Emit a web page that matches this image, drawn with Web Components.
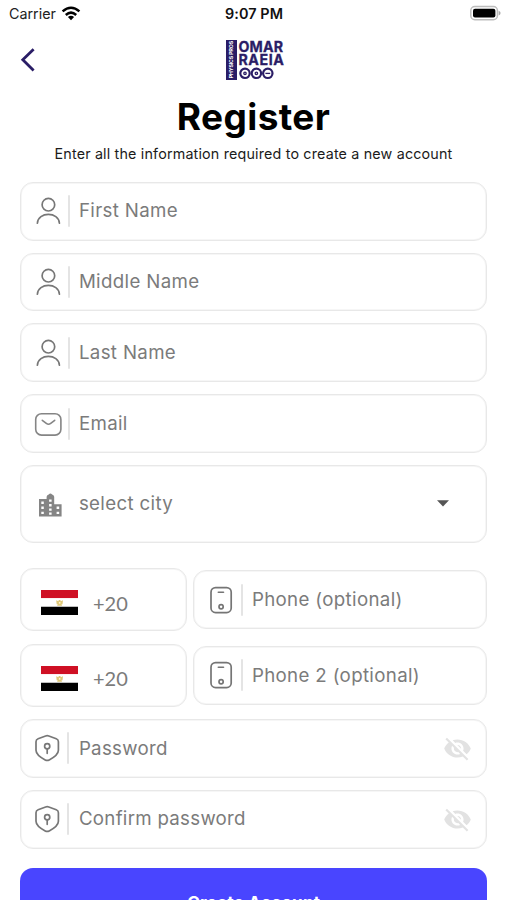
<!DOCTYPE html>
<html lang="en">
<head>
<meta charset="utf-8">
<title>Register</title>
<style>
html,body{margin:0;height:900px;overflow:hidden;background:#fff}
</style>
</head>
<body>
<register-screen></register-screen>
<script>
const ICONS = {
  user: `<svg width="28" height="30" viewBox="0 0 28 30" fill="none" stroke="#777" stroke-width="1.7" stroke-linecap="round"><circle cx="14.4" cy="8.7" r="6.3"/><path d="M3.4 27.2C3.9 15.5 24.9 15.5 25.4 27.2"/></svg>`,
  mail: `<svg width="28" height="30" viewBox="0 0 28 30" fill="none" stroke="#858585" stroke-width="1.6" stroke-linecap="round"><rect x="1.7" y="4.7" width="25.2" height="21.4" rx="5.8"/><path d="M8.3 11.3L12.3 14.4Q14.5 16.1 16.7 14.4L20.7 11.3"/></svg>`,
  city: `<svg width="28" height="30" viewBox="-1 -1.6 28 30"><path fill="#858585" fill-rule="evenodd" d="M4 8.4h7.6V6.2Q12 4.6 13.7 4Q15.4 1.6 17.1 4Q18.8 4.6 19.2 6.2v7.5h7.4v12.2H4zM6.3 11v2.3h2.5V11zm0 5v2.3h2.5V16zm0 5.1v2.4h2.5v-2.4zM14.1 8.8v2.3h2.5V8.8zm0 4.7v2.3h2.5v-2.3zm0 4.3v2.3h2.5v-2.3zm0 4.2v2.1h2.5V22zM21.6 16v2.3h2.6V16zm0 5.1v2.4h2.6v-2.4z"/></svg>`,
  phone: `<svg width="28" height="30" viewBox="0 0 28 30" fill="none" stroke="#757575" stroke-width="1.7" stroke-linecap="round"><rect x="4" y="2.6" width="20.2" height="25" rx="4.6"/><path d="M11.3 7.2h5.2" stroke-width="1.6"/><circle cx="14.1" cy="21.8" r="2.1"/></svg>`,
  shield: `<svg width="28" height="30" viewBox="0 0 28 30" fill="none" stroke="#777" stroke-width="1.7" stroke-linecap="round" stroke-linejoin="round"><path d="M11.6 3Q13.2 2.4 14.8 3L22.3 5.7Q24.4 6.5 24.4 8.7V17.2C24.4 21 20.8 23.9 15.2 26.9Q13.2 28 11.2 26.9C5.6 23.9 2 21 2 17.2V8.7Q2 6.5 4.1 5.7Z"/><circle cx="13.2" cy="13.2" r="2.6"/><path d="M13.2 16v4.3"/></svg>`,
  eye: `<svg width="29" height="29" viewBox="0 0 24 24" fill="#e2e2e2"><path d="M12 7c2.76 0 5 2.24 5 5 0 .65-.13 1.26-.36 1.83l2.92 2.92c1.51-1.26 2.7-2.89 3.43-4.75-1.73-4.39-6-7.5-11-7.5-1.4 0-2.74.25-3.98.7l2.16 2.16C10.74 7.13 11.35 7 12 7zM2 4.27l2.28 2.28.46.46C3.08 8.3 1.78 10.02 1 12c1.73 4.39 6 7.5 11 7.5 1.55 0 3.03-.3 4.38-.84l.42.42L19.73 22 21 20.73 3.27 3 2 4.27zM7.53 9.8l1.55 1.55c-.05.21-.08.43-.08.65 0 1.66 1.34 3 3 3 .22 0 .44-.03.65-.08l1.55 1.55c-.67.33-1.41.53-2.2.53-2.76 0-5-2.24-5-5 0-.79.2-1.53.53-2.2zm4.31-.78l3.15 3.15.02-.16c0-1.66-1.34-3-3-3l-.17.01z"/></svg>`,
  caret: `<svg width="12" height="7" viewBox="0 0 12 7"><path d="M0 .3h12L6 6.5z" fill="#555"/></svg>`
};
function define(name, html) {
  customElements.define(name, class extends HTMLElement {
    constructor() {
      super();
      this.attachShadow({mode: 'open'}).innerHTML = html;
    }
    connectedCallback() {
      for (const slot of this.shadowRoot.querySelectorAll('[data-icon]')) {
        const key = this.getAttribute(slot.dataset.icon);
        slot.innerHTML = ICONS[key] || '';
        slot.hidden = !key;
      }
    }
  });
}

define('status-bar', `<style>
:host{display:grid;grid-template-columns:1fr auto 1fr;align-items:center;height:28px;padding:0 6px 0 9px;box-sizing:border-box;font-size:14.3px;line-height:28px;color:#222}
.left{display:flex;align-items:center;gap:5px}
.time{font-weight:600;font-size:14.4px;color:#111;letter-spacing:.1px;margin-right:2px}
.battery{justify-self:end;display:flex;margin-top:-2px}
svg{display:block}
.left svg{margin-top:-2px}
</style>
<div class="left"><span>Carrier</span><svg width="20" height="15" viewBox="0 0 20 15" fill="none" stroke="#000" stroke-width="2.5"><path d="M1.6 5.4Q10 -2 18.4 5.4"/><path d="M4.8 9Q10 4.3 15.2 9"/><path d="M10 14.2L6.9 11.1Q10 8.6 13.1 11.1Z" fill="#000" stroke="none"/></svg></div>
<span class="time">9:07 PM</span>
<div class="battery"><svg width="31" height="16" viewBox="0 0 31 16"><rect x=".8" y="1.5" width="26.6" height="13.2" rx="4" fill="#fff" stroke="#bdbdbd" stroke-width="1.5"/><rect x="3" y="3.7" width="22.4" height="8.8" rx="2" fill="#000"/><path d="M28.6 5.7Q30.6 6.5 30.6 8.1T28.6 10.5z" fill="#aaa"/></svg></div>`);

define('brand-logo', `<style>
:host{display:flex;gap:2px;height:40px;width:59px;color:#2a1d66}
.tab{width:11px;flex:none;background:#2a1d66;color:#fff;display:flex;align-items:center;justify-content:center}
.tab span{writing-mode:vertical-rl;transform:rotate(180deg);font:700 5.2px/11px Inter,sans-serif;white-space:nowrap;letter-spacing:-.1px}
.words{display:flex;flex-direction:column;font:700 14.2px/13px Inter,sans-serif;-webkit-text-stroke:.3px #2a1d66}
.words span{white-space:nowrap;height:13px}
.a{letter-spacing:.15px}.b{letter-spacing:.55px}
svg{display:block;margin-top:.5px}
</style>
<div class="tab"><span>PHYSICS PROS</span></div>
<div class="words"><span class="a">OMAR</span><span class="b">RAEIA</span>
<svg width="36" height="13" viewBox="0 0 36 13" fill="none" stroke="#2a1d66" stroke-width="2.2"><circle cx="6" cy="6.3" r="4.7"/><circle cx="17.4" cy="6.3" r="4.7"/><circle cx="28.8" cy="6.3" r="4.7"/><g stroke-width="1.3"><circle cx="6" cy="6.3" r="1.2"/><circle cx="17.4" cy="6.3" r="1.2"/><path d="M26.4 6.4h4.8"/></g></svg></div>`);

define('nav-header', `<style>
:host{display:grid;grid-template-columns:1fr auto 1fr;height:64px;padding:12px 17px 0 20px;box-sizing:border-box;align-items:start}
.back{margin-top:7px;display:block}
</style>
<svg class="back" width="16" height="26" viewBox="0 0 16 26" fill="none" stroke="#2a1d66" stroke-width="2.8"><path d="M13.6 2.2L2.8 12.8L13.6 23.4"/></svg>
<brand-logo></brand-logo><i></i>`);

define('form-field', `<style>
:host{display:flex;align-items:center;height:58.8px;box-sizing:border-box;border:1px solid #e8e8e8;box-shadow:inset 0 0 0 1px #f6f6f6;border-radius:13px;padding:0 14px 0 13.4px;background:#fff;color:#7b7b7b;font-size:18.7px;letter-spacing:.34px;min-width:0}
:host([tall]){height:78px;padding-right:37px}
.lead{display:flex}
.bar{width:2px;height:32px;background:#e4e4e4;margin:0 8.5px 0 6px;border-radius:1px}
:host([icon=shield]) .bar{margin:0 9.5px 0 5px}
:host([icon=shield]){letter-spacing:.28px}
:host([tall]) .bar{visibility:hidden}
.label{flex:1;white-space:nowrap;line-height:30px;padding-top:.6px}
.trail{display:flex}
[hidden]{display:none}
svg{display:block}
</style>
<span class="lead" data-icon="icon"></span><span class="bar"></span><span class="label"><slot></slot></span><span class="trail" data-icon="action"></span>`);

define('country-code', `<style>
:host{display:flex;align-items:center;gap:15px;width:167px;height:63.4px;box-sizing:border-box;border:1px solid #e8e8e8;box-shadow:inset 0 0 0 1px #f6f6f6;border-radius:13px;padding:6px 0 0 20px;color:#7b7b7b;font:20px/28px Lato,sans-serif}
svg{display:block}
</style>
<svg width="37" height="25" viewBox="0 0 37 25"><path fill="#cf1024" d="M0 0h37v8.3H0z"/><path fill="#fff" d="M0 8.3h37v8.4H0z"/><path fill="#000" d="M0 16.7h37V25H0z"/><g fill="#dfc878"><path d="M15.2 10.2l2.2 1 .4-1.1h1.6l.4 1.1 2.2-1-.5 4-1.2.3.9 1.3h-5.2l.9-1.3-1.2-.3z"/></g><path d="M17.9 12h1.5v1.7h-1.5z" fill="#fff5cf"/></svg>
<slot></slot>`);

define('phone-row', `<style>
:host{display:flex;align-items:center;gap:6px;height:63.4px}
::slotted(form-field){flex:1}
</style><slot></slot>`);

define('primary-button', `<style>
:host{display:flex;justify-content:center;height:60px;border-radius:13px;background:#4945ff;color:#fff;font-weight:700;font-size:17px;letter-spacing:.25px;line-height:20px;padding-top:25px;box-sizing:border-box}
</style><slot></slot>`);

define('register-screen', `<style>
:host{display:block;width:507px;height:900px;overflow:hidden;background:#fff;font-family:Inter,sans-serif}
h1{margin:0;text-align:center;font-size:37px;line-height:50px;font-weight:700;color:#000;letter-spacing:.4px}
p{margin:0;text-align:center;font-size:14.3px;letter-spacing:.18px;line-height:20px;height:39.8px;padding-top:1.5px;color:#1b1b1b;box-sizing:border-box}
form{display:flex;flex-direction:column;gap:12px;margin:0 19.6px 0 20px}
.phones{display:flex;flex-direction:column;gap:12.2px;margin:13px 0 0}
primary-button{margin-top:7px}
</style>
<status-bar></status-bar>
<nav-header></nav-header>
<h1>Register</h1>
<p>Enter all the information required to create a new account</p>
<form>
<form-field icon="user">First Name</form-field>
<form-field icon="user">Middle Name</form-field>
<form-field icon="user">Last Name</form-field>
<form-field icon="mail">Email</form-field>
<form-field icon="city" action="caret" tall>select city</form-field>
<div class="phones">
<phone-row><country-code>+20</country-code><form-field icon="phone">Phone (optional)</form-field></phone-row>
<phone-row><country-code>+20</country-code><form-field icon="phone">Phone 2 (optional)</form-field></phone-row>
</div>
<form-field icon="shield" action="eye">Password</form-field>
<form-field icon="shield" action="eye">Confirm password</form-field>
<primary-button>Create Account</primary-button>
</form>`);
</script>
</body>
</html>
